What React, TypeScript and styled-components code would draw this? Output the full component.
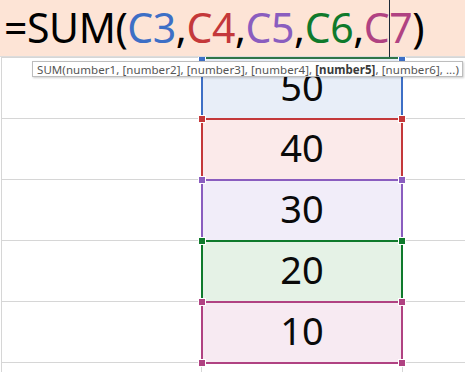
import styled, { createGlobalStyle } from "styled-components";

const GlobalStyle = createGlobalStyle`
  html, body {
    margin: 0;
    padding: 0;
    background: #fff;
    overflow: hidden;
  }
  body {
    font-family: "Noto Sans", "Open Sans", sans-serif;
  }
`;

const Page = styled.div`
  width: 465px;
  height: 372px;
  overflow: hidden;
`;

const FormulaBar = styled.div`
  position: relative;
  z-index: 2;
  display: flex;
  align-items: center;
  height: 57px;
  padding: 0 0 2px 4px;
  box-sizing: border-box;
  background: #fde4d6;
  border-bottom: 1px solid #dcdcdc;
  font-size: 41px;
  letter-spacing: -0.42px;
  color: #000;
  white-space: pre;
`;

const Token = styled.span<{ $color?: string }>`
  color: ${(p) => p.$color ?? "#000"};
`;

const Caret = styled.span`
  align-self: stretch;
  width: 1px;
  margin: -1px -0.5px -3px;
  background: #1c2a38;
`;

const Sheet = styled.div`
  position: relative;
  display: grid;
  grid-template-columns: 200px 202px 1fr;
  grid-auto-rows: 61px;
  padding-left: 1px;
`;

const Side = styled.div<{ $first?: boolean }>`
  border-top: 1px solid #d6d6d6;
  border-left: ${(p) => (p.$first ? "1px solid #d6d6d6" : "0")};
`;

const RefCell = styled.div<{ $line: string; $fill: string; $top?: string }>`
  position: relative;
  display: flex;
  align-items: center;
  justify-content: center;
  margin-bottom: -2px;
  padding-bottom: 5px;
  box-sizing: border-box;
  border: 2px solid ${(p) => p.$line};
  border-top-color: ${(p) => p.$top ?? p.$line};
  background: ${(p) => p.$fill};
  font-size: 38px;
  color: #0a0a0a;
`;

const Handle = styled.span<{ $color: string; $v: "top" | "bottom"; $h: "left" | "right" }>`
  position: absolute;
  ${(p) => p.$v}: -5px;
  ${(p) => p.$h}: -5px;
  width: 6px;
  height: 6px;
  border: 1px solid #fff;
  background: ${(p) => p.$color};
`;

const TailMid = styled.div`
  border-left: 1px solid #d6d6d6;
  border-right: 1px solid #d6d6d6;
`;

const Tooltip = styled.div`
  position: absolute;
  z-index: 3;
  top: 4px;
  left: 32px;
  width: 431px;
  height: 16px;
  box-sizing: border-box;
  padding-left: 4px;
  display: flex;
  align-items: center;
  background: #fff;
  border: 1px solid #bdbdbd;
  box-shadow: 1px 1px 2px rgba(0, 0, 0, 0.2);
  font-size: 11.5px;
  letter-spacing: 0.07px;
  color: #555;
  white-space: pre;
`;

const Current = styled.b`
  color: #3a3a3a;
  font-weight: 700;
`;

const refs = [
  { name: "C3", value: 50, line: "#3d6fc6", fill: "#e8eef8", top: "#2f7548" },
  { name: "C4", value: 40, line: "#c4383a", fill: "#fbeaea" },
  { name: "C5", value: 30, line: "#8a5dbf", fill: "#f1edf9" },
  { name: "C6", value: 20, line: "#0f7a2c", fill: "#e5f2e6" },
  { name: "C7", value: 10, line: "#b04282", fill: "#f7eaf2" },
];

const corners = [
  ["top", "left"],
  ["top", "right"],
  ["bottom", "left"],
  ["bottom", "right"],
] as const;

export default function App() {
  return (
    <Page>
      <GlobalStyle />
      <FormulaBar>
        <Token>=SUM(</Token>
        {refs.map((r, i) =>
          i < refs.length - 1 ? (
            <Token key={r.name}>
              <Token $color={r.line}>{r.name}</Token>,
            </Token>
          ) : (
            <Token key={r.name} $color={r.line}>
              C
            </Token>
          )
        )}
        <Caret />
        <Token $color={refs[4].line}>7</Token>
        <Token>)</Token>
      </FormulaBar>
      <Sheet>
        <Tooltip>
          SUM(number1, [number2], [number3], [number4], <Current>[number5]</Current>, [number6], ...)
        </Tooltip>
        {refs.map((r) => (
          <>
            <Side $first key={r.name + "l"} />
            <RefCell key={r.name} $line={r.line} $fill={r.fill} $top={r.top}>
              {r.value}
              {corners.map(([v, h]) => (
                <Handle key={v + h} $v={v} $h={h} $color={r.line} />
              ))}
            </RefCell>
            <Side key={r.name + "r"} />
          </>
        ))}
        <Side $first />
        <TailMid />
        <Side />
      </Sheet>
    </Page>
  );
}
